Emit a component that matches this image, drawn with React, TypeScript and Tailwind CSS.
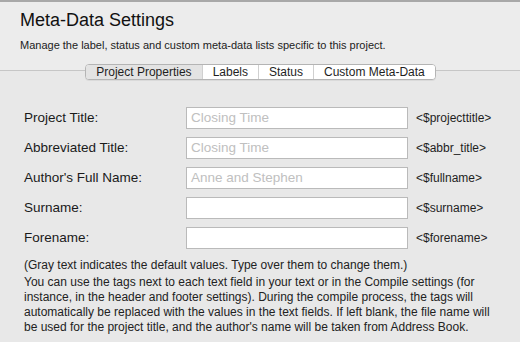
import React from "react";

const font = { fontFamily: '"Liberation Sans", Arial, sans-serif' };

type Field = {
  label: string;
  placeholder: string;
  tag: string;
};

const fields: Field[] = [
  { label: "Project Title:", placeholder: "Closing Time", tag: "<$projecttitle>" },
  { label: "Abbreviated Title:", placeholder: "Closing Time", tag: "<$abbr_title>" },
  { label: "Author's Full Name:", placeholder: "Anne and Stephen", tag: "<$fullname>" },
  { label: "Surname:", placeholder: "", tag: "<$surname>" },
  { label: "Forename:", placeholder: "", tag: "<$forename>" },
];

const tabs = ["Project Properties", "Labels", "Status", "Custom Meta-Data"];

function SegmentedTabs({ active }: { active: number }) {
  return (
    <div className="flex h-[16px] overflow-hidden rounded-[4px] border border-[#b4b4b4] bg-white shadow-[0_1px_0_rgba(0,0,0,0.06)]">
      {tabs.map((t, i) => (
        <div
          key={t}
          className={
            "flex items-center px-[10px] text-[12px] leading-none text-[#1e1e1e] " +
            (i > 0 ? "border-l border-[#d0d0d0] " : "") +
            (i === active ? "bg-[#e3e3e3]" : "bg-white")
          }
        >
          {t}
        </div>
      ))}
    </div>
  );
}

export default function App() {
  return (
    <div className="h-[342px] w-[520px] overflow-hidden bg-[#e8e8e8] text-[#1e1e1e]" style={font}>
      <div className="border-t-2 border-[#a8a8a8] bg-[#ececec]">
        <div className="h-[69px] border-b border-[#c6c6c6] px-[20px] pt-[7px]">
          <h1 className="text-[18px] leading-[22px] text-[#111]">Meta-Data Settings</h1>
          <p className="mt-[7px] text-[11px] leading-[14px] text-[#222]">
            Manage the label, status and custom meta-data lists specific to this project.
          </p>
        </div>
      </div>

      <div className="relative -mt-[7px] flex justify-center pl-[1px]">
        <SegmentedTabs active={0} />
      </div>

      <div className="mt-[27px] flex flex-col gap-[8px] pl-[24px]">
        {fields.map((f) => (
          <div key={f.label} className="flex h-[22px] items-center">
            <div className="w-[162px] text-[13.5px] text-[#1a1a1a]">{f.label}</div>
            <div className="flex h-[22px] w-[222px] items-center border border-[#bababa] bg-white pl-[4px] text-[13.5px] text-[#c0c0c0]">
              {f.placeholder}
            </div>
            <div className="ml-[8px] text-[12px] text-[#1e1e1e]">{f.tag}</div>
          </div>
        ))}
      </div>

      <div className="pl-[24px] text-[12px] leading-[15px] text-[#222]">
        <p className="mt-[9px]">
          (Gray text indicates the default values. Type over them to change them.)
        </p>
        <p className="mt-[2px] whitespace-nowrap">
          You can use the tags next to each text field in your text or in the Compile settings (for
          <br />
          instance, in the header and footer settings). During the compile process, the tags will
          <br />
          automatically be replaced with the values in the text fields. If left blank, the file name will
          <br />
          be used for the project title, and the author's name will be taken from Address Book.
        </p>
      </div>
    </div>
  );
}
